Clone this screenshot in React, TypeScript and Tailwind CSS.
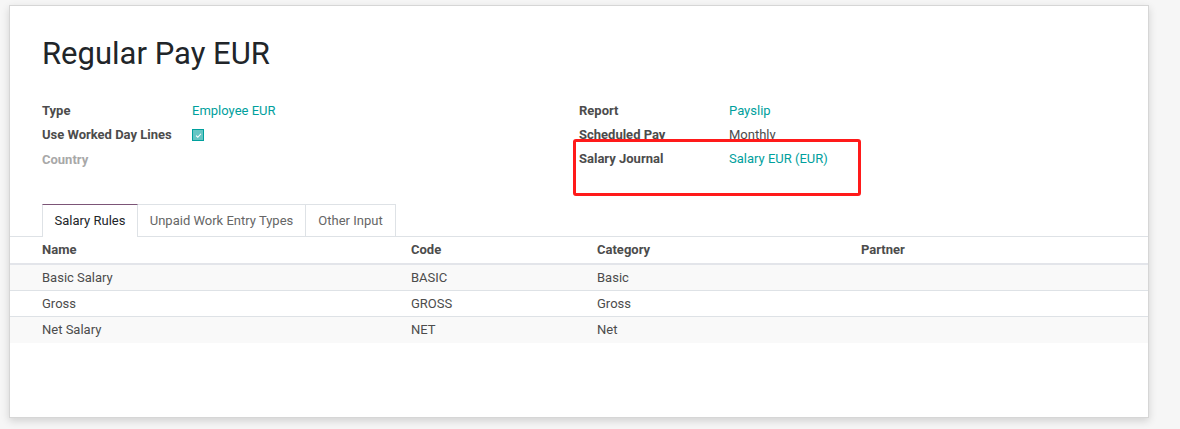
import React from "react";

const rules = [
  { name: "Basic Salary", code: "BASIC", category: "Basic" },
  { name: "Gross", code: "GROSS", category: "Gross" },
  { name: "Net Salary", code: "NET", category: "Net" },
];

const Field = ({ label, children, muted }: { label: string; children?: React.ReactNode; muted?: boolean }) => (
  <div className="flex items-center h-[24px]">
    <div className={`w-[150px] font-bold ${muted ? "text-[#a8a8a8]" : "text-[#4c4c4c]"}`}>{label}</div>
    <div>{children}</div>
  </div>
);

export default function App() {
  return (
    <div
      className="w-[1180px] h-[429px] bg-[#f6f6f6] text-[13px] text-[#4c4c4c] overflow-hidden"
      style={{ fontFamily: "Roboto, 'Liberation Sans', sans-serif" }}
    >
      <div className="ml-[9px] mt-[5px] w-[1140px] h-[413px] bg-white border border-[#d6d6d6] shadow-[0_3px_8px_rgba(0,0,0,0.15)] relative">
        <h1 className="pl-[32px] pt-[28px] text-[31px] leading-[40px] text-[#212529]">Regular Pay EUR</h1>

        {/* header fields */}
        <div className="grid grid-cols-[537px_1fr] pl-[32px] mt-[25px]">
          <div className="flex flex-col [&>div:last-child]:mt-[1px]">
            <Field label="Type">
              <span className="text-[#00a09d]">Employee EUR</span>
            </Field>
            <Field label="Use Worked Day Lines">
              <span className="flex items-center justify-center w-[12px] h-[12px] border border-[#00a09d] bg-[#66c6c4]">
                <svg viewBox="0 0 10 10" className="w-[7px] h-[7px]">
                  <path d="M1.5 5.2 L4 7.5 L8.5 2.5" stroke="white" strokeWidth="1.6" fill="none" />
                </svg>
              </span>
            </Field>
            <Field label="Country" muted />
          </div>
          <div className="flex flex-col">
            <Field label="Report">
              <span className="text-[#00a09d]">Payslip</span>
            </Field>
            <Field label="Scheduled Pay">
              <span className="text-[#4c4c4c]">Monthly</span>
            </Field>
            <Field label="Salary Journal">
              <span className="text-[#00a09d]">Salary EUR (EUR)</span>
            </Field>
          </div>
        </div>

        {/* red highlight */}
        <div className="absolute left-[563px] top-[133px] w-[288px] h-[57px] border-[3px] border-[#ff1a1a] rounded-[3px]" />

        {/* tabs */}
        <div className="mt-[32px] flex pl-[32px] h-[32px]">
          <div className="w-[96px] flex items-center justify-center border border-b-0 border-[#dee2e6] border-t-[#7c5577] bg-white text-[#212529] relative z-10 h-[33px]">
            Salary Rules
          </div>
          <div className="w-[168px] flex items-center justify-center border border-l-0 border-b-0 border-[#dee2e6] text-[#666]">
            Unpaid Work Entry Types
          </div>
          <div className="w-[90px] flex items-center justify-center border border-l-0 border-b-0 border-[#dee2e6] text-[#666]">
            Other Input
          </div>
        </div>

        {/* table */}
        <div className="border-t border-[#dee2e6]">
          <div className="grid grid-cols-[369px_186px_264px_1fr] pl-[32px] h-[28px] items-center font-bold text-[#4c4c4c] border-b-2 border-[#e3e5ea]">
            <div>Name</div>
            <div>Code</div>
            <div>Category</div>
            <div>Partner</div>
          </div>
          {rules.map((r, i) => (
            <div
              key={r.code}
              className={`grid grid-cols-[369px_186px_264px_1fr] pl-[32px] h-[26px] items-center text-[#4c4c4c] ${
                i % 2 === 0 ? "bg-[#f9f9f9]" : "bg-white"
              } ${i < rules.length - 1 ? "border-b border-[#dee2e6]" : ""}`}
            >
              <div>{r.name}</div>
              <div>{r.code}</div>
              <div>{r.category}</div>
              <div></div>
            </div>
          ))}
        </div>
      </div>
    </div>
  );
}
